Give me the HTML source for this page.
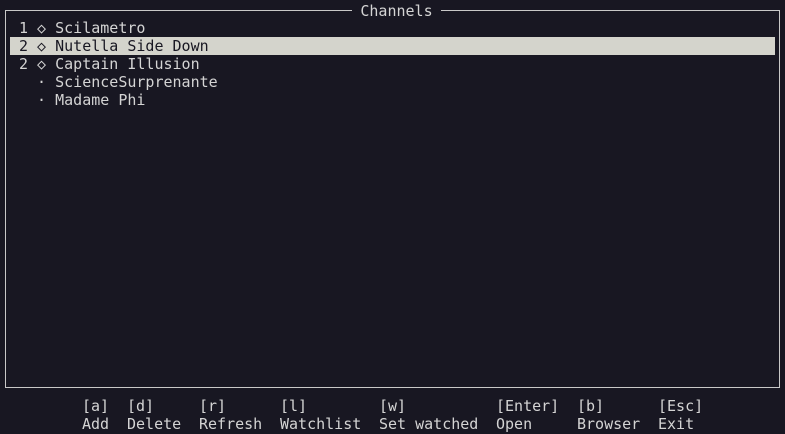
<!DOCTYPE html><html><head><style>
body{margin:0;width:785px;height:434px;background:#181722;overflow:hidden;font-family:"DejaVu Sans Mono","Liberation Mono",monospace;font-size:15px;color:#d4d4d4;position:relative}
.a{position:absolute;white-space:pre;line-height:18px}
.box{position:absolute;left:5px;top:10px;width:773px;height:376px;border:1px solid #c8c8c8}
.t{position:absolute;left:352px;top:2px;width:89px;background:#181722;text-align:center;line-height:18px}
.hl{position:absolute;left:10px;top:37px;width:765px;height:18px;background:#d4d4cc}
</style></head><body>
<div class="box"></div>
<div class="t">Channels</div>
<div class="hl"></div>
<div class="a" style="left:19px;top:19px">1 ◇ Scilametro</div>
<div class="a" style="left:19px;top:37px;color:#181722">2 ◇ Nutella Side Down</div>
<div class="a" style="left:19px;top:55px">2 ◇ Captain Illusion</div>
<div class="a" style="left:19px;top:73px">  · ScienceSurprenante</div>
<div class="a" style="left:19px;top:91px">  · Madame Phi</div>
<div class="a" style="left:82px;top:397px">[a]
Add</div>
<div class="a" style="left:127px;top:397px">[d]
Delete</div>
<div class="a" style="left:199px;top:397px">[r]
Refresh</div>
<div class="a" style="left:280px;top:397px">[l]
Watchlist</div>
<div class="a" style="left:379px;top:397px">[w]
Set watched</div>
<div class="a" style="left:496px;top:397px">[Enter]
Open</div>
<div class="a" style="left:577px;top:397px">[b]
Browser</div>
<div class="a" style="left:658px;top:397px">[Esc]
Exit</div>
</body></html>
